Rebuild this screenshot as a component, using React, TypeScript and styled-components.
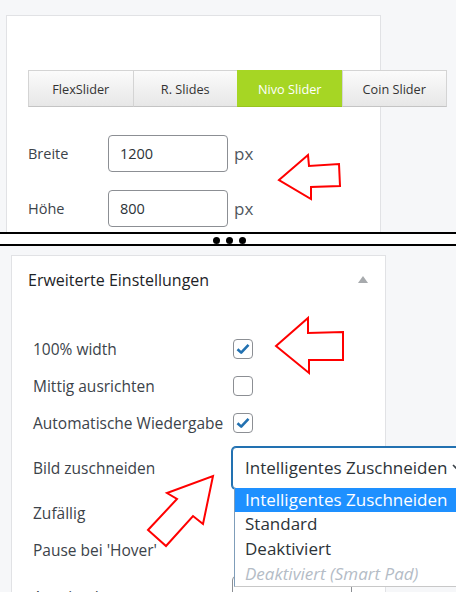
import styled, { createGlobalStyle } from 'styled-components'

const Global = createGlobalStyle`
  html, body { margin: 0; padding: 0; background: #f6f7f9; }
  body { font-family: "Open Sans", "Noto Sans", sans-serif; overflow: hidden; }
  * { box-sizing: border-box; }
`

const Page = styled.div`
  position: relative;
  width: 456px;
  height: 592px;
  overflow: hidden;
`

const Panel = styled.section<{ $h?: number; $pad: string }>`
  height: ${p => (p.$h ? `${p.$h}px` : 'auto')};
  overflow: hidden;
  background: #f6f7f9;
  padding: ${p => p.$pad};
`

const Card = styled.div<{ $pad: string }>`
  width: 375px;
  min-height: 400px;
  background: #fff;
  border: 1px solid #e1e2e5;
  padding: ${p => p.$pad};
`

const Tabs = styled.div`
  display: flex;
  width: 419px;
  height: 37px;
`

const Tab = styled.div<{ $active?: boolean }>`
  flex: 1;
  display: flex;
  align-items: center;
  justify-content: center;
  font-size: 12.7px;
  color: ${p => (p.$active ? '#fff' : '#333')};
  background: ${p => (p.$active ? '#a6d624' : 'linear-gradient(#fbfbfb, #e7e7e7)')};
  border: 1px solid ${p => (p.$active ? '#a6d624' : '#d4d4d4')};
  border-bottom-color: ${p => (p.$active ? '#98c41e' : '#c4c4c4')};
  & + & { margin-left: -1px; }
`

const SizeGrid = styled.div`
  display: grid;
  grid-template-columns: 80px auto 1fr;
  align-items: center;
  row-gap: 18px;
  margin-top: 28px;
`

const SizeLabel = styled.span`
  font-size: 14.5px;
  color: #3c434a;
`

const NumberBox = styled.div<{ $w: number; $h: number; $shift?: number }>`
  width: ${p => p.$w}px;
  height: ${p => p.$h}px;
  margin-left: ${p => p.$shift ?? 0}px;
  display: flex;
  align-items: center;
  padding-left: 11px;
  border: 1px solid #8c8f94;
  border-radius: 4px;
  background: #fff;
  font-size: 14.5px;
  color: #2c3338;
`

const Unit = styled.span`
  margin-left: 6px;
  font-size: 17px;
  color: #50575e;
`

const Divider = styled.div`
  display: flex;
  justify-content: center;
  gap: 6px;
  height: 14px;
  padding: 3px 0 0 3px;
  background: #fff;
  border-top: 2px solid #000;
  border-bottom: 2px solid #000;
`

const Dot = styled.span`
  width: 7px;
  height: 7px;
  border-radius: 50%;
  background: #000;
`

const CardHead = styled.div`
  display: flex;
  align-items: center;
  justify-content: space-between;
  height: 47px;
  padding: 0 17px 0 16px;
  font-size: 16px;
  color: #1d2327;
`

const Caret = styled.span`
  width: 0;
  height: 0;
  border-left: 5px solid transparent;
  border-right: 5px solid transparent;
  border-bottom: 7px solid #a7aaad;
`

const Body = styled.div`
  padding: 27px 0 0 21px;
`

const Row = styled.div<{ $h?: number; $pt?: number }>`
  display: grid;
  grid-template-columns: 200px 1fr;
  align-items: center;
  height: ${p => p.$h ?? 37}px;
  padding-top: ${p => p.$pt ?? 0}px;
  font-size: 15.5px;
  color: #3c434a;
  white-space: nowrap;
`

const Check = styled.span`
  width: 20px;
  height: 20px;
  border: 1px solid #8c8f94;
  border-radius: 4px;
  background: #fff;
  display: flex;
  align-items: center;
  justify-content: center;
`

const SelectWrap = styled.div`
  position: relative;
  width: 260px;
  margin-left: -1px;
`

const SelectBox = styled.div`
  height: 42px;
  display: flex;
  align-items: center;
  gap: 5px;
  padding: 0 0 0 12px;
  border: 1px solid #2271b1;
  box-shadow: 0 0 0 1px #2271b1;
  border-radius: 4px;
  background: #fff;
  font-size: 17px;
  color: #2c3338;
  white-space: nowrap;
`

const Menu = styled.ul`
  position: absolute;
  left: 2px;
  top: 41px;
  width: 260px;
  margin: 0;
  padding: 0;
  list-style: none;
  background: #fff;
  border-left: 1px solid #7f9db9;
  border-bottom: 1px solid #c8c8c8;
  z-index: 2;
`

const Option = styled.li<{ $active?: boolean; $disabled?: boolean }>`
  height: 24.7px;
  line-height: 24.7px;
  padding-left: 10px;
  font-size: 17px;
  white-space: nowrap;
  background: ${p => (p.$active ? '#1e90ff' : 'transparent')};
  color: ${p => (p.$active ? '#fff' : p.$disabled ? '#b4bcc6' : '#2c3338')};
  font-style: ${p => (p.$disabled ? 'italic' : 'normal')};
`

const Marks = styled.svg`
  position: absolute;
  left: 0;
  top: 0;
  pointer-events: none;
  z-index: 3;
`

const Tick = () => (
  <svg width="14" height="12" viewBox="0 0 14 12">
    <path d="M1.5 6.2 L5.2 9.6 L12.5 1.8" fill="none" stroke="#2271b1" strokeWidth="2.6" strokeLinejoin="round" />
  </svg>
)

const options = ['Intelligentes Zuschneiden', 'Standard', 'Deaktiviert']

export default function App() {
  return (
    <Page>
      <Global />
      <Panel $h={232} $pad="15px 0 0 6px">
        <Card $pad="54px 0 0 21px">
          <Tabs>
            <Tab>FlexSlider</Tab>
            <Tab>R. Slides</Tab>
            <Tab $active>Nivo Slider</Tab>
            <Tab>Coin Slider</Tab>
          </Tabs>
          <SizeGrid>
            <SizeLabel>Breite</SizeLabel>
            <NumberBox $w={120} $h={37}>1200</NumberBox>
            <Unit>px</Unit>
            <SizeLabel>Höhe</SizeLabel>
            <NumberBox $w={120} $h={37}>800</NumberBox>
            <Unit>px</Unit>
          </SizeGrid>
        </Card>
      </Panel>

      <Divider>
        <Dot />
        <Dot />
        <Dot />
      </Divider>

      <Panel $pad="9px 0 0 11px">
        <Card $pad="0">
          <CardHead>
            Erweiterte Einstellungen
            <Caret />
          </CardHead>
          <Body>
            <Row>
              100% width
              <Check><Tick /></Check>
            </Row>
            <Row>
              Mittig ausrichten
              <Check />
            </Row>
            <Row>
              Automatische Wiedergabe
              <Check><Tick /></Check>
            </Row>
            <Row $h={53}>
              Bild zuschneiden
              <SelectWrap>
                <SelectBox>
                  Intelligentes Zuschneiden
                  <svg width="10" height="7" viewBox="0 0 10 7">
                    <path d="M1 1 L5 5 L9 1" fill="none" stroke="#3c434a" strokeWidth="1.6" />
                  </svg>
                </SelectBox>
                <Menu>
                  {options.map((o, i) => (
                    <Option key={o} $active={i === 0}>{o}</Option>
                  ))}
                  <Option $disabled>Deaktiviert (Smart Pad)</Option>
                </Menu>
              </SelectWrap>
            </Row>
            <Row>Zufällig</Row>
            <Row>Pause bei 'Hover'</Row>
            <Row $h={56} $pt={2}>
              Anzeigedauer
              <NumberBox $w={120} $h={42} $shift={-1}>3000</NumberBox>
            </Row>
          </Body>
        </Card>
      </Panel>

      <Marks width="456" height="592" viewBox="0 0 456 592">
        <g fill="none" stroke="#f00" strokeWidth="2" strokeLinejoin="miter">
          <polygon points="279,180 308,155 309,166 339,164 340,186 311,187 311,199" />
          <polygon points="276,346 308,318 308,333 343,332 343,360 309,360 309,373" />
          <polygon points="213,476 203,524 193,516 166,546 148,530 177,499 167,493" />
        </g>
      </Marks>
    </Page>
  )
}
